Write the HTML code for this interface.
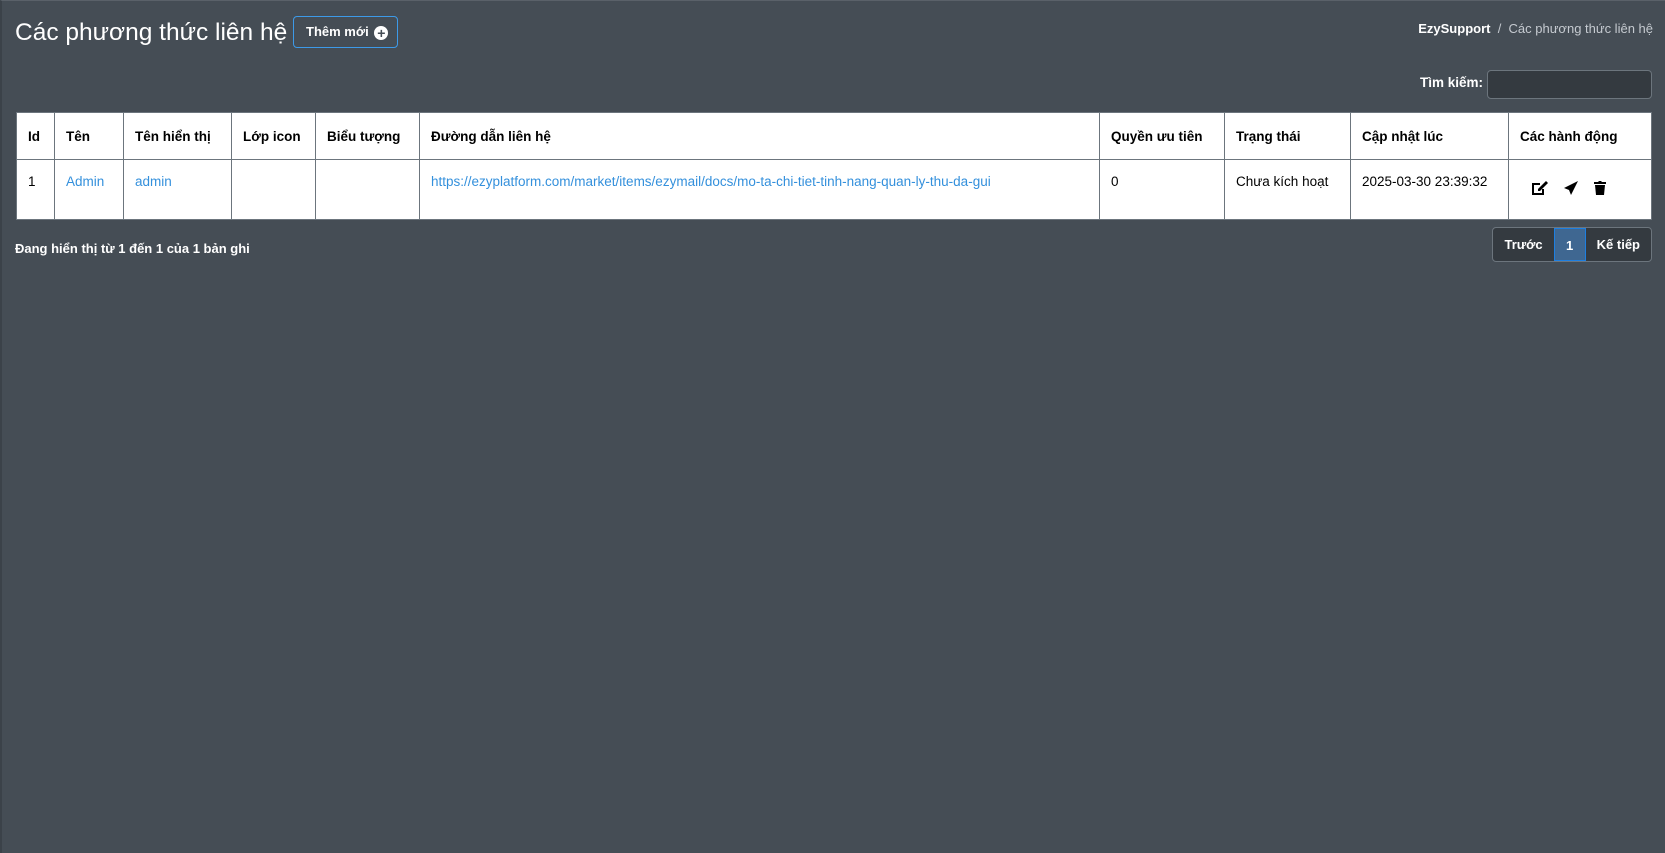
<!DOCTYPE html>
<html><head><meta charset="utf-8"><style>
*{box-sizing:border-box}
body{margin:0;width:1665px;height:853px;background:#454d55;font-family:"Liberation Sans","Noto Sans CJK JP",sans-serif;color:#fff;position:relative;overflow:hidden;border-left:2px solid #3b4249;border-top:1px solid #5a6169}
.abs{position:absolute}
h1{position:absolute;left:13px;top:14px;margin:0;font-weight:400;font-size:24.5px;line-height:36px}
.btn{left:291px;top:15px;width:105px;height:32px;border:1px solid #3d9ae8;border-radius:4px;font-size:13px;font-weight:bold;line-height:30px;padding-left:12px}
.btn span{display:inline-block;width:14px;height:14px;border-radius:50%;background:#fff;color:#454d55;text-align:center;line-height:14px;font-size:14px;vertical-align:-2px;margin-left:2px}
.bc{right:12px;top:20px;font-size:13px}
.bc b{color:#fff}.bc .g{color:#c5cad0}
.sl{left:1418px;top:74px;font-size:13.5px;font-weight:bold}
.inp{left:1485px;top:69px;width:165px;height:29px;background:#343a40;border:1px solid #6c757d;border-radius:4px}
table{position:absolute;left:14px;top:111px;width:1636px;border-collapse:collapse;background:#fff;color:#000;font-size:13.5px}
td,th{border:1px solid #6c757d;text-align:left;vertical-align:top;padding:0 11px}
th{height:47px;vertical-align:middle;font-weight:bold}
td{height:60px;padding-top:14px}
a{color:#3490dc;text-decoration:none}
.foot{left:13px;top:240px;font-size:13px;font-weight:bold}
.pg{right:13px;top:226px;height:35px;display:flex;border:1px solid #6c757d;border-radius:4px;overflow:hidden;font-size:13px;font-weight:bold;background:#343a40}
.pg div{padding:0 11px;line-height:33px}
.pg .a{background:#3f6791;border:1px solid #1e7fe0;width:32px;text-align:center;padding:0}
</style></head><body>
<h1>Các phương thức liên hệ</h1>
<div class="abs btn">Thêm mới <span>+</span></div>
<div class="abs bc"><b>EzySupport</b> <span class="g">&nbsp;/&nbsp; Các phương thức liên hệ</span></div>
<div class="abs sl">Tìm kiếm:</div>
<div class="abs inp"></div>
<table>
<tr><th style="width:38px">Id</th><th style="width:69px">Tên</th><th style="width:108px">Tên hiển thị</th><th style="width:84px">Lớp icon</th><th style="width:104px">Biểu tượng</th><th style="width:680px">Đường dẫn liên hệ</th><th style="width:125px">Quyền ưu tiên</th><th style="width:126px">Trạng thái</th><th style="width:158px">Cập nhật lúc</th><th>Các hành động</th></tr>
<tr><td>1</td><td><a>Admin</a></td><td><a>admin</a></td><td></td><td></td><td><a>https://ezyplatform.com/market/items/ezymail/docs/mo-ta-chi-tiet-tinh-nang-quan-ly-thu-da-gui</a></td><td>0</td><td>Chưa kích hoạt</td><td>2025-03-30 23:39:32</td>
<td style="padding-top:20px;padding-left:22px">
<svg width="18" height="16" viewBox="0 0 18 16" style="margin-right:14px"><path d="M1 3h8v2H3v8h8V9h2v6H1z" fill="#000"/><path d="M7 9l8-8 2 2-8 8H7z" fill="#000"/></svg><svg width="16" height="16" viewBox="0 0 16 16" style="margin-right:14px"><path d="M15 1L1 8l5 2 2 5z" fill="#000"/></svg><svg width="14" height="16" viewBox="0 0 14 16"><path d="M1 2h4l1-1h2l1 1h4v2H1z M2 5h10l-1 10H3z" fill="#000"/></svg>
</td></tr>
</table>
<div class="abs foot">Đang hiển thị từ 1 đến 1 của 1 bản ghi</div>
<div class="abs pg"><div>Trước</div><div class="a">1</div><div>Kế tiếp</div></div>
</body></html>
